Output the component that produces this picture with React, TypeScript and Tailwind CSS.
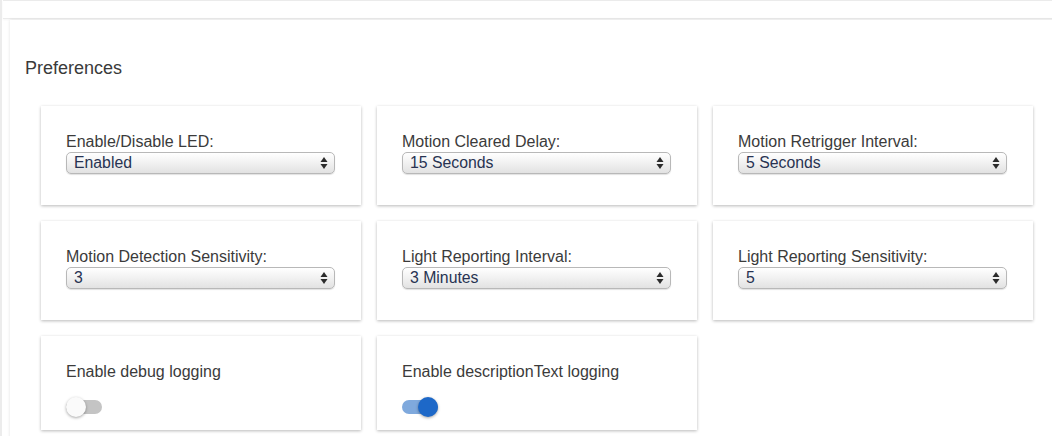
import React from "react";

const selects = [
  { label: "Enable/Disable LED:", value: "Enabled" },
  { label: "Motion Cleared Delay:", value: "15 Seconds" },
  { label: "Motion Retrigger Interval:", value: "5 Seconds" },
  { label: "Motion Detection Sensitivity:", value: "3" },
  { label: "Light Reporting Interval:", value: "3 Minutes" },
  { label: "Light Reporting Sensitivity:", value: "5" },
];

const toggles = [
  { label: "Enable debug logging", on: false },
  { label: "Enable descriptionText logging", on: true },
];

function FakeSelect({ value }: { value: string }) {
  return (
    <div className="mt-[1px] flex h-[22px] w-[269px] items-center justify-between rounded-[5px] border border-[#b8b8b8] bg-gradient-to-b from-[#ffffff] via-[#f1f1f1] to-[#e2e2e2] pl-[7px] pr-[6px] shadow-[0_1px_1px_rgba(0,0,0,0.12)]">
      <span className="text-[15.8px] leading-[18px] text-[#283352]">{value}</span>
      <svg width="8" height="14" viewBox="0 0 8 14">
        <path d="M4 1 L7.5 6 L0.5 6 Z" fill="#2b2b2b" />
        <path d="M4 13 L7.5 8 L0.5 8 Z" fill="#2b2b2b" />
      </svg>
    </div>
  );
}

function Toggle({ on }: { on: boolean }) {
  return (
    <div className="relative mt-[16px] h-[20px] w-[38px]">
      <div
        className={`absolute left-0 top-[3px] h-[14px] w-[36px] rounded-full ${
          on ? "bg-[#7fa9dd]" : "bg-[#c4c4c4]"
        }`}
      />
      <div
        className={`absolute top-0 h-[20px] w-[20px] rounded-full shadow-[0_1px_3px_rgba(0,0,0,0.35)] ${
          on ? "left-[16px] bg-[#1d68c8]" : "left-0 bg-[#fafafa]"
        }`}
      />
    </div>
  );
}

function Card({ children, short }: { children: React.ReactNode; short?: boolean }) {
  return (
    <div
      className={`${short ? "h-[94px]" : "h-[99px]"} w-[320px] bg-white px-[25px] pt-[27px] shadow-[0_1px_3px_rgba(0,0,0,0.28)]`}
    >
      {children}
    </div>
  );
}

export default function App() {
  return (
    <div
      className="h-[436px] w-[1052px] overflow-hidden border-l-2 border-[#ececec] bg-white"
      style={{ fontFamily: '"Liberation Sans", Arial, sans-serif' }}
    >
      {/* bottom of the card above */}
      <div className="ml-[1px] h-[19px] w-[1100px] border-y border-[#ebebeb] bg-white shadow-[0_1px_2px_rgba(0,0,0,0.04)]" />

      <div className="ml-[8px] mt-[1px] h-[500px] w-[1100px] bg-white pl-[15px] pt-[36px] shadow-[0_0_3px_rgba(0,0,0,0.12)]">
        <h2 className="text-[18px] leading-[24px] text-[#3a3a3a]">Preferences</h2>

        <div className="ml-[16px] mt-[26px] grid w-[992px] grid-cols-[320px_320px_320px] items-start gap-[16px]">
          {selects.map((s) => (
            <Card key={s.label}>
              <div className="text-[16px] leading-[18px] text-[#3b3b3b]">{s.label}</div>
              <FakeSelect value={s.value} />
            </Card>
          ))}
          {toggles.map((t) => (
            <Card key={t.label} short>
              <div className="text-[16px] leading-[18px] text-[#3b3b3b]">{t.label}</div>
              <Toggle on={t.on} />
            </Card>
          ))}
        </div>
      </div>
    </div>
  );
}
